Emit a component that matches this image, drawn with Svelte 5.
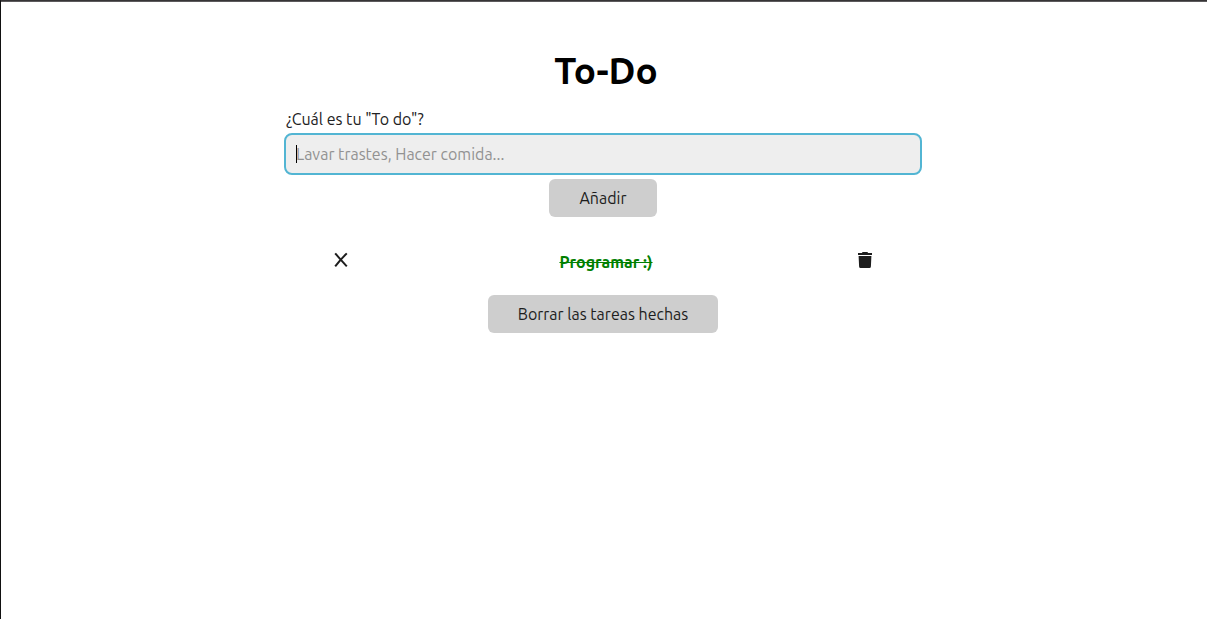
<script>
  let draft = $state('');
  let tasks = $state([{ id: 1, text: 'Programar :)', done: true }]);

  function add(event) {
    event.preventDefault();
    const text = draft.trim();
    if (!text) return;
    tasks.push({ id: Date.now(), text, done: false });
    draft = '';
  }

  function remove(id) {
    tasks = tasks.filter((task) => task.id !== id);
  }

  function clearDone() {
    tasks = tasks.filter((task) => !task.done);
  }
</script>

<div class="page">
  <main>
    <h1>To-Do</h1>

    <form onsubmit={add}>
      <label for="todo">¿Cuál es tu "To do"?</label>
      <div class="field" class:empty={!draft}>
        <input id="todo" type="text" autocomplete="off" placeholder="Lavar trastes, Hacer comida..." bind:value={draft} />
      </div>
      <button class="action" type="submit">Añadir</button>
    </form>

    <ul>
      {#each tasks as task (task.id)}
        <li>
          <button class="icon" type="button" aria-label="Cambiar estado" onclick={() => (task.done = !task.done)}>
            <svg width="14" height="16" viewBox="0 0 14 16" aria-hidden="true">
              <path d="M1.2 1.4Q6 7 12.8 14.4M12.8 1.4Q7 7 1.2 14.4" fill="none" stroke="#1d1d1d" stroke-width="2" />
            </svg>
          </button>
          <span class="text" class:done={task.done}>{task.text}</span>
          <button class="icon" type="button" aria-label="Borrar tarea" onclick={() => remove(task.id)}>
            <svg width="14" height="16" viewBox="0 0 14 16" aria-hidden="true">
              <path d="M0 1h4q0-1 1-1h4q1 0 1 1h4v2H0zM.6 4h12.800L12.900 14.500Q12.800 16 11.500 16h-9Q1.200 16 1.100 14.500z" fill="#1d1d1d" />
            </svg>
          </button>
        </li>
      {/each}
    </ul>

    <button class="action" type="button" onclick={clearDone}>Borrar las tareas hechas</button>
  </main>
</div>

<style>
  :global(body) {
    margin: 0;
    background: #fff;
  }

  .page {
    box-sizing: border-box;
    min-height: 100vh;
    padding: 48px 26px 48px 24px;
    border-top: 1px solid #363436;
    border-left: 1px solid #111;
    box-shadow: inset 0 1px #5c5a5c;
    color: #222;
    font: 16px/24px Ubuntu, "Noto Sans", sans-serif;
  }

  main,
  form {
    display: flex;
    flex-direction: column;
    align-items: center;
  }

  main {
    max-width: 638px;
    margin: 0 auto;
  }

  form,
  ul {
    width: 100%;
  }

  h1,
  .text {
    padding-left: 6px;
  }

  h1 {
    margin: 0 0 14px;
    color: #000;
    font-size: 37px;
    line-height: 44px;
  }

  label {
    align-self: flex-start;
    padding: 0 2px;
  }

  .field {
    position: relative;
    width: 100%;
    margin: 2px 0 4px;
  }

  .field.empty::before {
    content: "";
    position: absolute;
    left: 12px;
    top: 12px;
    width: 1px;
    height: 18px;
    background: #000;
  }

  input {
    display: block;
    box-sizing: border-box;
    width: 100%;
    height: 42px;
    padding: 0 10px;
    border: 2px solid #52b5d3;
    border-radius: 8px;
    outline: none;
    background: #eee;
    color: #222;
    font: inherit;
  }

  input::placeholder {
    color: #929292;
    opacity: 1;
  }

  button {
    border: 0;
    color: #1d1d1d;
    font: inherit;
    cursor: pointer;
  }

  .action {
    height: 38px;
    padding: 0 30px;
    border-radius: 6px;
    background: #cecece;
  }

  ul {
    margin: 32px 0 20px;
    padding: 0;
    list-style: none;
  }

  li {
    display: grid;
    grid-template-columns: 18% 1fr 18%;
    place-items: center;
    min-height: 26px;
  }

  .icon {
    display: flex;
    padding: 2px 6px 6px;
    background: none;
  }

  .text {
    font-weight: 700;
  }

  .done {
    color: green;
    text-decoration: line-through;
  }
</style>
